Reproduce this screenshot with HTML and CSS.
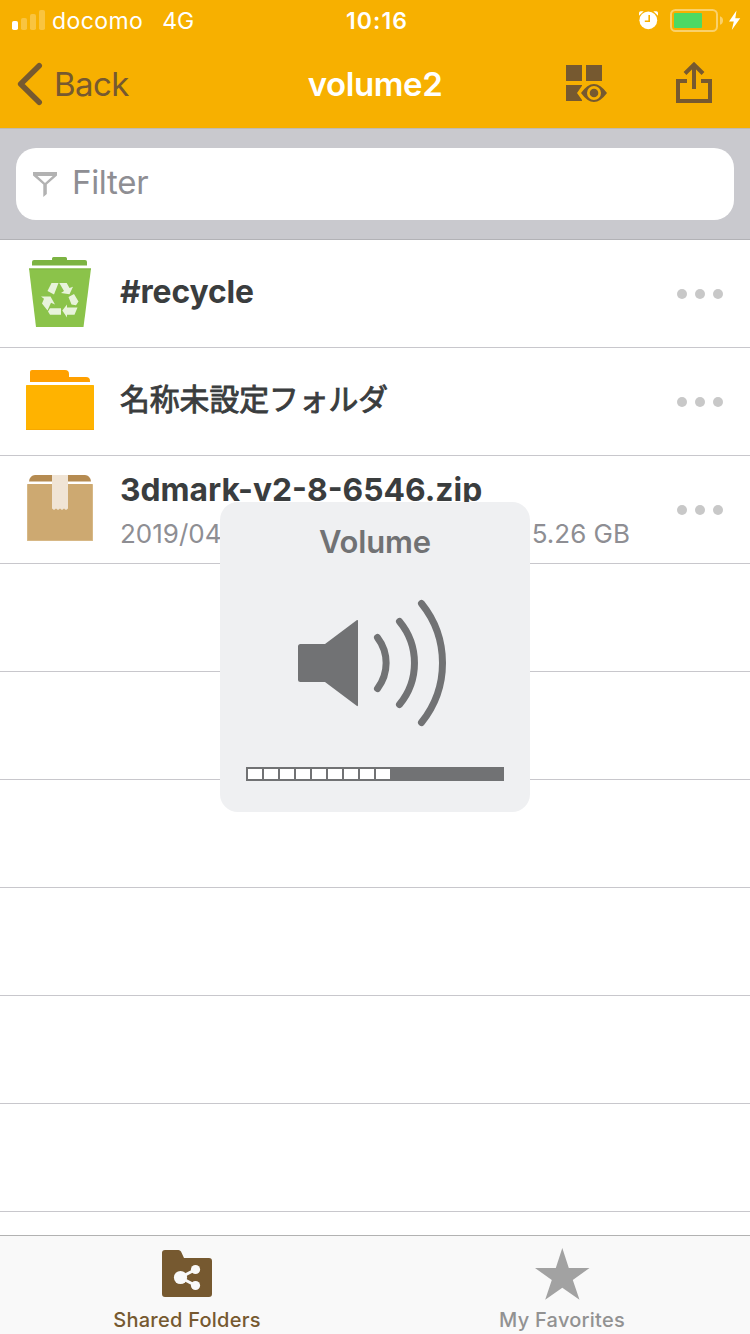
FILE: index.html
```html
<!DOCTYPE html>
<html lang="en">
<head>
<meta charset="utf-8">
<title>volume2</title>
<link rel="stylesheet" href="styles.css">
</head>
<body>
<div class="screen">
  <header class="header">
    <div class="status">
      <div class="status-left">
        <svg class="signal" width="34" height="22" viewBox="12 10 34 22" fill="#fff"><rect x="12" y="21" width="6" height="9" rx="1.8"/><g opacity=".25"><rect x="21" y="18" width="6" height="12" rx="1.8"/><rect x="30" y="14" width="6" height="16" rx="1.8"/><rect x="39" y="10" width="6" height="20" rx="1.8"/></g></svg>
        <span class="carrier">docomo</span>
        <span class="network">4G</span>
      </div>
      <span class="clock">10:16</span>
      <svg class="power" width="104" height="28" viewBox="638 7 104 28">
        <circle cx="648.3" cy="20.3" r="8.9" fill="#fff"/>
        <path d="M639 15.800V13q0-1.700 1.700-1.700h3zM658 15.800V13q0-1.700-1.700-1.700h-3z" fill="#fff"/>
        <path d="M649.200 15v6.200h-4.400" fill="none" stroke="#f7b000" stroke-width="1.600"/>
        <rect x="671" y="10" width="46" height="21" rx="4.500" fill="none" stroke="#fff" stroke-opacity=".42" stroke-width="2"/>
        <path d="M720 16.200q3 1 3 4.300t-3 4.300z" fill="#fff" opacity=".42"/>
        <rect x="674" y="13" width="28" height="15" rx="1" fill="#4cd964"/>
        <path d="M736.500 10.500L729 21.500h4.800L731.800 30l8.400-11.700h-4.900z" fill="#fff"/>
      </svg>
    </div>
    <nav class="nav">
      <a class="back">
        <svg width="28" height="44" viewBox="16 62 28 44"><path d="M39.200 65.800L20.700 84L39.200 102.200" fill="none" stroke="#765930" stroke-width="5.600" stroke-linecap="round" stroke-linejoin="round"/></svg>
        <span class="back-label">Back</span>
      </a>
      <h1 class="title">volume2</h1>
      <div class="actions">
        <svg width="44" height="40" viewBox="565 64 44 40" fill="#765930"><path d="M566 65h16v16h-16zM586 65h16v16h-16zM566 85h16v.8l-5 7.200 5 7v1h-16z"/><path fill-rule="evenodd" d="M581 93Q593.800 75 607 93Q593.800 111 581 93ZM594 86a7 7 0 1 0 0 14 7 7 0 0 0 0-14Z"/><circle cx="594" cy="93" r="4.300"/></svg>
        <svg width="40" height="44" viewBox="674 62 40 44" fill="none" stroke="#765930" stroke-width="4"><path d="M687 81H678V101H710V81H701M694 89V65M685 73.500L694 64.600L703 73.500"/></svg>
      </div>
    </nav>
  </header>

  <div class="filter-bar">
    <div class="filter">
      <svg width="26" height="27" viewBox="32 171 26 27" fill="#b2b2b2"><path fill-rule="evenodd" d="M33 172H57V175.500L46.800 184.500V194L43.300 197V184.500L33 175.500ZM37.500 176L45 182.900L52.700 176Z"/></svg>
      <span class="placeholder">Filter</span>
    </div>
  </div>

  <main class="list">
    <div class="row">
      <svg class="file-icon" width="68" height="76" viewBox="26 254 68 76">
        <path d="M32 265.600V262q0-2 2-2H52V258.500q0-1.500 1.500-1.500h12q1.500 0 1.500 1.500V260H85q2 0 2 2v3.600z" fill="#7cb342"/>
        <path d="M29 268.500H91L83.500 327H36z" fill="#8bc34a"/><path d="M29 269H91" stroke="#7cb342"/>
        <g fill="#e8f3db"><path d="M51.500 283H58.500L54 294.500L47.500 291ZM59.300 283H66.700L69.500 288L73 286.800L69.500 294.300L61 293L64 291ZM68.500 297L74 294L78.500 301.500L76 305.300L71.500 304.500ZM62.300 310.500L67 304.500V307.500H77.500L74.500 314.700H67V317.500ZM50 308.300H61V314.700H50L48 311.500ZM41 296.500H50.500L55 304.500L51 302.800L47.500 310.500L42 303.500L44 298.800Z"/></g>
      </svg>
      <div class="info"><span class="name recycle">#recycle</span></div>
      <span class="more"><i></i><i></i><i></i></span>
    </div>
    <div class="row">
      <svg class="file-icon" width="68" height="76" viewBox="26 362 68 76"><path d="M30 382V372q0-2 2-2H65q4 0 4 4v3H86q4 0 4 4v1z" fill="#ffa000"/><rect x="26" y="385" width="68" height="45" rx=".5" fill="#ffb300"/><path d="M26 429.500H94" stroke="#f7a800"/></svg>
      <div class="info"><span class="name japanese" lang="ja">名称未設定フォルダ</span></div>
      <span class="more"><i></i><i></i><i></i></span>
    </div>
    <div class="row">
      <svg class="file-icon" width="68" height="76" viewBox="26 470 68 76"><path d="M29 481.500Q30 475 35 475H85Q90 475 91 481.500z" fill="#b58b51"/><path d="M27 482H93V484H27z" fill="#fff"/><rect x="27" y="484" width="66" height="57" rx="1" fill="#cda971"/><path d="M27.500 485V540.500H92.500V485" fill="none" stroke="#d9bc8c" stroke-width=".8"/><path d="M52 475H68V508.500L66 510L64 508.500L62 510L60 508.500L58 510L56 508.500L54 510L52 508.500z" fill="#f0e4d5"/></svg>
      <div class="info">
        <span class="name zip">3dmark-v2-8-6546.zip</span>
        <span class="meta"><span class="date">2019/04</span><span class="size">5.26 GB</span></span>
      </div>
      <span class="more"><i></i><i></i><i></i></span>
    </div>
    <div class="row"></div><div class="row"></div><div class="row"></div>
    <div class="row"></div><div class="row"></div><div class="row"></div>
  </main>

  <footer class="tabs">
    <a class="tab active">
      <svg width="52" height="50" viewBox="161 1249 52 50"><path d="M162 1253q0-3 3-3H178.500q1.500 0 2.500 1.500L184 1258H209q3 0 3 3v33q0 3-3 3H165q-3 0-3-3z" fill="#765930"/><path d="M195.500 1269.500L180.500 1277.500L195.500 1285.500" fill="none" stroke="#f9f9f9" stroke-width="3"/><g fill="#f9f9f9"><circle cx="180.500" cy="1277.500" r="6.600"/><circle cx="195.500" cy="1269.500" r="4.600"/><circle cx="195.500" cy="1285.500" r="4.600"/></g></svg>
      <span class="tab-label">Shared Folders</span>
    </a>
    <a class="tab">
      <svg width="56" height="54" viewBox="534.500 1247 56 54" fill="#a2a2a2"><path d="M562.800 1248L569.300 1268H590L573.300 1280L580 1299.700L562.800 1287.800L545.700 1299.700L552.300 1280L535.500 1268H556.300z"/></svg>
      <span class="tab-label">My Favorites</span>
    </a>
  </footer>

  <section class="volume">
    <h2 class="volume-title">Volume</h2>
    <svg width="150" height="130" viewBox="297 598 150 130"><path d="M300.500 644H325L357 620q1-.5 1 1V705q0 1.500-1 1L325 682H300.500Q298 682 298 679.500V646.500Q298 644 300.500 644z" fill="#717274"/><path d="M377.500 637.500A42 42 0 0 1 377.500 688.500M399.500 621.500A65 65 0 0 1 399.500 704.500M421.500 603.500A94.800 94.800 0 0 1 421.500 722.500" fill="none" stroke="#717274" stroke-width="7" stroke-linecap="round"/></svg>
    <div class="level"><i></i><i></i><i></i><i></i><i></i><i></i><i></i><i></i><i></i></div>
  </section>
</div>
</body>
</html>
```
FILE: styles.css
```css
* { box-sizing: border-box; }
body { margin: 0; }
.screen {
  position: relative;
  display: flex;
  flex-direction: column;
  width: 750px;
  height: 1334px;
  overflow: hidden;
  background: #fff;
  font-family: Inter, "Noto Sans CJK JP", sans-serif;
}
svg { display: block; flex: none; }
.header { height: 128px; background: #f7b000; }
.status {
  display: grid;
  grid-template-columns: 1fr auto 1fr;
  align-items: center;
  height: 40px;
  padding: 1px 8px 0 12px;
  color: #fff;
  font-size: 23px;
}
.status-left { display: flex; align-items: center; }
.carrier { margin-left: 6px; letter-spacing: .4px; }
.network { margin-left: 19px; }
.clock { font-weight: 600; letter-spacing: 1.1px; }
.power { justify-self: end; }
.nav {
  display: grid;
  grid-template-columns: 1fr auto 1fr;
  align-items: center;
  height: 88px;
  padding: 0 16px;
}
.back { display: flex; align-items: center; gap: 10px; color: #765930; }
.back-label { font-size: 33px; letter-spacing: -.6px; }
.title { margin: 0; color: #fff; font-size: 33px; font-weight: 600; line-height: 40px; letter-spacing: -.4px; }
.actions { display: flex; align-items: center; justify-content: flex-end; gap: 65px; padding-right: 20px; }
.filter-bar {
  height: 112px;
  padding: 20px 16px;
  background: #c9c9ce;
  border-bottom: 1px solid #b2b2b6;
  box-shadow: inset 0 1px #bfbab0;
}
.filter {
  display: flex;
  align-items: center;
  gap: 14px;
  height: 72px;
  padding: 0 16px;
  border-radius: 20px;
  background: #fff;
  color: #8e8e93;
}
.placeholder { margin-top: -4px; font-size: 33px; letter-spacing: -.3px; }
.list { flex: 1; min-height: 0; overflow: hidden; }
.row {
  display: flex;
  align-items: center;
  height: 108px;
  padding: 0 27px 0 26px;
  border-bottom: 1px solid #c8c7cc;
}
.file-icon { margin-top: -3px; }
.info { display: flex; flex: 1; flex-direction: column; margin-left: 26px; }
.name { color: #3a3d3e; font-size: 31.800px; font-weight: 700; line-height: 40px; white-space: nowrap; }
.recycle { margin-top: -4px; letter-spacing: -.1px; }
.japanese {
  margin-top: -9px;
  font-family: "Noto Sans CJK JP", sans-serif;
  font-size: 29.800px;
  font-weight: 400;
  -webkit-text-stroke: .9px #3a3d3e;
}
.zip { margin-top: 1px; }
.meta { display: flex; justify-content: space-between; width: 510px; margin-top: 8px; color: #8e8e93; font-size: 26px; line-height: 32px; }
.more { display: flex; gap: 8px; }
.more i { width: 10px; height: 10px; border-radius: 50%; background: #c8c8c8; }
.tabs {
  display: grid;
  grid-template-columns: 374px 376px;
  height: 99px;
  background: #f9f9f9;
  border-top: 1px solid #b2b2b2;
}
.tab { display: flex; flex-direction: column; align-items: center; justify-content: space-between; padding-top: 11px; color: #929292; font-size: 20px; font-weight: 500; line-height: 28px; }
.active { padding-top: 13px; color: #765930; }
.tab-label { letter-spacing: .250px; }
.volume {
  position: absolute;
  top: 502px;
  left: 220px;
  display: flex;
  flex-direction: column;
  align-items: center;
  width: 310px;
  height: 310px;
  padding-top: 20px;
  border-radius: 18px;
  background: #eff0f2;
}
.volume svg { margin: 36px 6px 39px 0; }
.volume-title { margin: 0; color: #717274; font-size: 31px; font-weight: 600; line-height: 40px; letter-spacing: -.150px; }
.level { display: flex; gap: 2px; width: 258px; height: 14px; padding: 2px; background: #717274; }
.level i { width: 14px; height: 10px; background: #fff; }
```
